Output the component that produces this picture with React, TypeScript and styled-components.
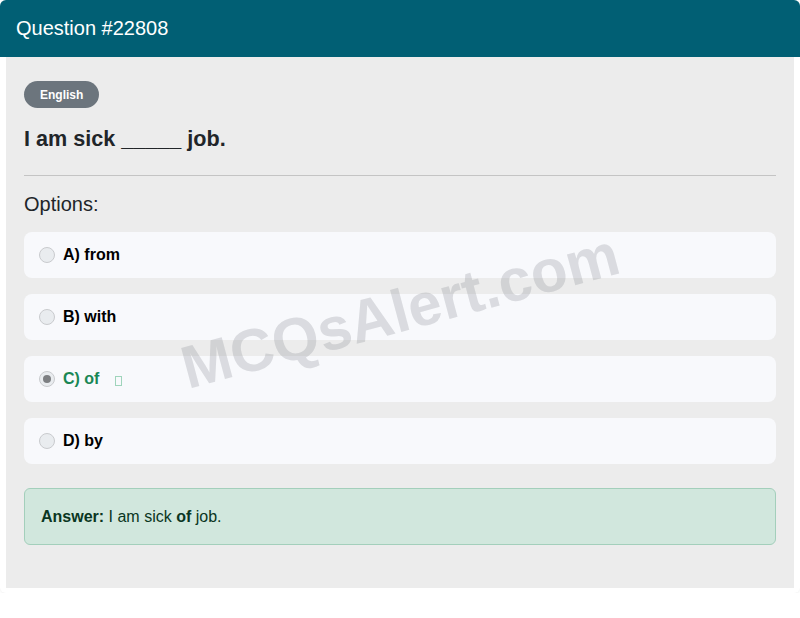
import styled, {createGlobalStyle} from "styled-components";

const GlobalStyle = createGlobalStyle`
    * { box-sizing: border-box; }
    body {
        margin: 0;
        background: #ffffff;
        font-family: "Liberation Sans", Arial, sans-serif;
        color: #212529;
    }
`

const Card = styled.div`
    width: 800px;
    background: #ffffff;
    border-radius: 6px;
    padding: 0 6px 5px;
    box-shadow: 0 1px 3px rgba(0, 0, 0, 0.06);
`

const Header = styled.div`
    margin: 0 -6px;
    height: 57px;
    background: #015f74;
    color: #ffffff;
    border-radius: 6px 6px 0 0;
    display: flex;
    align-items: center;
    padding: 0 16px;
    font-size: 20px;
`

const Body = styled.div`
    position: relative;
    overflow: hidden;
    background: #ececec;
    padding: 24px 18px 43px;
    display: flex;
    flex-direction: column;
`

const Badge = styled.span`
    align-self: flex-start;
    background: #6c757d;
    color: #ffffff;
    font-size: 12px;
    font-weight: 700;
    height: 27px;
    padding: 1px 16px 0;
    border-radius: 14px;
    display: inline-flex;
    align-items: center;
`

const QuestionText = styled.h2`
    margin: 19px 0 0;
    font-size: 21.6px;
    line-height: 24px;
    font-weight: 700;
    color: #212529;
`

const Divider = styled.hr`
    margin: 24px 0 0;
    border: none;
    border-top: 1px solid #c4c4c4;
`

const OptionsTitle = styled.div`
    margin-top: 16px;
    font-size: 20px;
    line-height: 24px;
    color: #212529;
`

const OptionList = styled.div`
    margin-top: 16px;
    display: flex;
    flex-direction: column;
    gap: 16px;
`

const OptionRow = styled.div<{ $correct?: boolean }>`
    position: relative;
    z-index: 0;
    height: 46px;
    background: #f8f9fc;
    border-radius: 8px;
    display: flex;
    align-items: center;
    padding: 0 15px 1px;
    font-size: 16px;
    font-weight: 700;
    color: ${p => p.$correct ? "#198754" : "#000000"};
`

const Radio = styled.span<{ $checked?: boolean }>`
    width: 16px;
    height: 16px;
    border-radius: 50%;
    border: 1px solid #c9cbce;
    background: #e9ecef;
    margin-right: 8px;
    display: inline-flex;
    align-items: center;
    justify-content: center;

    &::after {
        content: "";
        display: ${p => p.$checked ? "block" : "none"};
        width: 8px;
        height: 8px;
        border-radius: 50%;
        background: #7d7f82;
    }
`

const MissingGlyph = styled.span`
    display: inline-block;
    width: 7px;
    height: 10px;
    margin-left: 16px;
    margin-top: 4px;
    border: 1px solid #9fd4bb;
`

const AnswerBox = styled.div`
    margin-top: 24px;
    background: #d1e7dd;
    border: 1px solid #a3cfbb;
    border-radius: 6px;
    padding: 16px;
    font-size: 16px;
    line-height: 23px;
    color: #0a3622;
`

const Watermark = styled.div`
    position: absolute;
    left: 50%;
    top: 50%;
    transform: translate(-50%, -50%) rotate(-15deg);
    font-size: 60px;
    font-weight: 700;
    color: rgba(140, 142, 150, 0.28);
    white-space: nowrap;
    pointer-events: none;
    z-index: 2;
    margin-top: -12px;
`

const options = [
    {label: "A) from"},
    {label: "B) with"},
    {label: "C) of", correct: true},
    {label: "D) by"},
]

export default function App() {
    return <>
        <GlobalStyle/>
        <Card>
            <Header>Question #22808</Header>
            <Body>
                <Badge>English</Badge>
                <QuestionText>I am sick _____ job.</QuestionText>
                <Divider/>
                <OptionsTitle>Options:</OptionsTitle>
                <OptionList>
                    {options.map(o =>
                        <OptionRow key={o.label} $correct={o.correct}>
                            <Radio $checked={o.correct}/>
                            {o.label}
                            {o.correct && <MissingGlyph/>}
                        </OptionRow>
                    )}
                </OptionList>
                <AnswerBox>
                    <strong>Answer:</strong> I am sick <strong>of</strong> job.
                </AnswerBox>
                <Watermark>MCQsAlert.com</Watermark>
            </Body>
        </Card>
    </>
}
